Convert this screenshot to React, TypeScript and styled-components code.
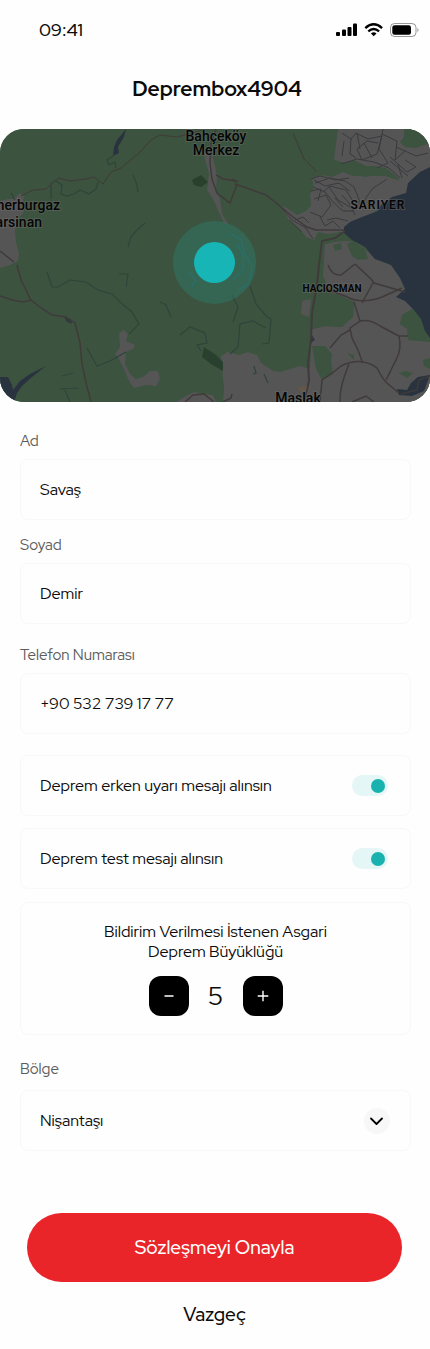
import React, { useState } from "react";
import styled, { createGlobalStyle } from "styled-components";

const GlobalStyle = createGlobalStyle`
  *, *::before, *::after { box-sizing: border-box; }
  body {
    margin: 0;
    background: #fefefe;
    color: #0b0b0b;
    font-family: "Red Hat Display", Lato, "Liberation Sans", sans-serif;
    text-rendering: optimizeLegibility;
  }
  button, input, select { font: inherit; color: inherit; text-rendering: inherit; }
`;

const Screen = styled.main`
  display: flex;
  flex-direction: column;
  min-height: 100vh;
  padding-bottom: 22px;
`;

const StatusBar = styled.div`
  display: flex;
  justify-content: space-between;
  align-items: center;
  height: 60px;
  padding: 0 10px 0 39px;
`;

const Clock = styled.time`
  font-size: 18px;
  line-height: 24px;
  font-weight: 500;
`;

const StatusIcons = styled.svg`
  display: block;
  width: 86px;
  height: 18px;
`;

const Title = styled.h1`
  margin: 15px 0 26px;
  padding-left: 4px;
  font-size: 21px;
  line-height: 28px;
  font-weight: 700;
  text-align: center;
`;

const MapFrame = styled.section`
  height: 273px;
  border-radius: 24px;
  overflow: hidden;
  background: #3c533f;
`;

const MapDrawing = styled.svg`
  display: block;
  width: 100%;
  height: 100%;
  font-family: Roboto, sans-serif;
  font-weight: 500;
`;

const Form = styled.form`
  display: flex;
  flex-direction: column;
  padding: 30px 19px 0 20px;
`;

const Field = styled.div<{ $after?: number; $gap?: number }>`
  display: flex;
  flex-direction: column;
  gap: ${(p) => p.$gap ?? 9}px;
  margin-bottom: ${(p) => p.$after ?? 0}px;
`;

const Label = styled.label`
  font-size: 15px;
  line-height: 18px;
  color: #5c5c5c;
`;

const TextInput = styled.input`
  width: 100%;
  height: 61px;
  padding: 0 19px;
  border: 1px solid #f8f8f8;
  border-radius: 8px;
  background: #fefefe;
  font-size: 16px;
  outline: none;
  &:focus-visible { border-color: #17b1ae; }
`;

const ToggleRow = styled.label<{ $after: number }>`
  display: flex;
  justify-content: space-between;
  align-items: center;
  height: 61px;
  margin-bottom: ${(p) => p.$after}px;
  padding: 0 22px 0 19px;
  border: 1px solid #f8f8f8;
  border-radius: 8px;
  font-size: 16px;
`;

const Switch = styled.input`
  appearance: none;
  display: flex;
  align-items: center;
  width: 36px;
  height: 21px;
  margin: 0;
  padding: 0 3px;
  border-radius: 11px;
  background: #eeeeee;
  cursor: pointer;
  &::before {
    content: "";
    width: 14px;
    height: 14px;
    border-radius: 50%;
    background: #a5a5a5;
  }
  &:checked { justify-content: flex-end; background: #e4f7f6; }
  &:checked::before { background: #19b2ae; }
`;

const StepperCard = styled.fieldset`
  display: flex;
  flex-direction: column;
  align-items: center;
  min-width: 0;
  margin: 0 0 25px;
  padding: 19px 20px 18px;
  border: 1px solid #f8f8f8;
  border-radius: 8px;
`;

const StepperText = styled.p`
  max-width: 240px;
  margin: 0 0 14px;
  font-size: 16px;
  line-height: 20px;
  text-align: center;
`;

const Stepper = styled.div`
  display: flex;
  align-items: center;
`;

const StepButton = styled.button`
  display: grid;
  place-items: center;
  width: 40px;
  height: 40px;
  padding: 0;
  border: 0;
  border-radius: 12px;
  background: #000;
  cursor: pointer;
`;

const StepValue = styled.output`
  width: 54px;
  font-size: 26px;
  line-height: 32px;
  text-align: center;
`;

const SelectBox = styled.div`
  display: grid;
  align-items: center;
  > * { grid-area: 1 / 1; }
`;

const Select = styled.select`
  appearance: none;
  width: 100%;
  height: 61px;
  padding: 0 60px 0 19px;
  border: 1px solid #f8f8f8;
  border-radius: 8px;
  background: #fefefe;
  font-size: 16px;
`;

const Chevron = styled.svg`
  justify-self: end;
  width: 26px;
  height: 26px;
  margin-right: 21px;
  pointer-events: none;
`;

const Submit = styled.button`
  height: 69px;
  margin: 62px 9px 21px 7px;
  border: 0;
  border-radius: 35px;
  background: #e92529;
  color: #fff;
  font-size: 19px;
  font-weight: 500;
  cursor: pointer;
`;

const Cancel = styled.button`
  align-self: center;
  margin-right: 2px;
  padding: 0;
  border: 0;
  background: none;
  font-size: 19px;
  line-height: 24px;
  font-weight: 500;
  cursor: pointer;
`;

function DeviceStatus() {
  return (
    <StatusIcons viewBox="0 0 86 18" aria-label="Sinyal, Wi-Fi, pil">
      <rect x="2" y="11" width="4" height="4" rx="1" />
      <rect x="8" y="8.500" width="4" height="6.500" rx="1" />
      <rect x="13.500" y="6" width="4" height="9" rx="1" />
      <rect x="19" y="2.500" width="4" height="12.500" rx="1" />
      <g fill="none" stroke="#000" strokeWidth="2.300">
        <path d="M31.300 7.100 Q39.700 -.6 48.100 7.100" />
        <path d="M34.300 10.300 Q39.700 5.600 45.100 10.300" />
      </g>
      <path d="M36.900 12.400 Q39.700 10 42.500 12.400 L39.700 15.300 Z" />
      <rect x="56.500" y="2.500" width="25.500" height="13" rx="4" fill="none" stroke="#000" strokeOpacity=".4" />
      <rect x="58.300" y="4.300" width="18.700" height="9.400" rx="2.200" />
      <path d="M83.500 7 Q85.500 9 83.500 11 Z" opacity=".5" />
    </StatusIcons>
  );
}

function RegionMap() {
  return (
    <MapDrawing viewBox="0 0 430 273" preserveAspectRatio="xMidYMid slice" role="img" aria-label="Konum haritası">
      <rect width="430" height="273" fill="#3c533f" />
      <g fill="#555555">
        <path d="M0 72L8 70L14 70L20 64L24 67L22 77L24 83L17 91L15 101L16 114L19 124L18 132L10 136L0 139Z" />
        <path d="M203 22L211 21L217 46L216 62L220 70L222 85L228 95L224 94L217 79L213 70L207 61L209 44L206 34Z" />
        <path d="M338 0L336 14L334 31L345 34L354 31L366 37L374 37L386 39L397 48L404 60L430 44V0Z" />
        <path d="M312 49L322 46L332 48L343 43L353 47L385 47L400 52L410 58L405 70L385 75L370 86L350 95L345 104L332 106L318 103L314 111L306 108L298 98L289 91L281 77L287 79L297 86L306 82L311 77L310 65L314 59Z" />
        <path d="M325 114L345 112L358 113L375 130L395 136L430 170V273H223L224 260L221 227L228 223L239 226L248 223L257 226L261 234L273 242L280 243L290 240L300 237L310 240L312 200L326 197L342 198L353 187L354 173L344 169L332 165L327 156L323 147Z" />
        <path d="M119 204L124 201L128 205L126 212L135 216L133 220L126 223L125 235L130 245L136 250L143 248L150 242L158 242L160 250L156 257L146 256L134 259L129 252L124 240L118 228L115 225L120 218Z" />
        <path d="M176 273L186 267L194 263L204 265L213 266L216 273ZM302 172L311 170L309 188L301 185Z" />
      </g>
      <g fill="#3c533f">
        <path d="M404 0L404 8L400 13L405 18L416 19L427 15L430 12V0Z" />
        <path d="M344 36L352 34L365 39L378 38L388 43L377 46L365 48L350 45L341 40Z" />
        <path d="M315 109L328 105L341 103L344 109L327 115ZM333 116L341 114L342 120L335 122Z" />
        <path d="M347 115L354 112L365 120L368 130L358 131L352 127Z" />
        <path d="M325 165L337 165L354 173L353 188L341 198L326 197L312 200L313 168Z" />
        <path d="M402 186L412 180L419 182L424 197L430 203V213L408 211L407 200L400 195Z" />
        <path d="M312 217L325 217L332 225L331 232L333 245L322 251L316 240ZM423 231L430 229V240L424 237Z" />
        <path d="M399 244L405 242L413 244L407 249ZM347 224L354 226L354 231Z" />
      </g>
      <g fill="#29333f">
        <path d="M430 38L420 43L408 54L406 64L392 68L381 76L378 82L362 88L350 93L344 98L344 104L352 111L365 118L375 130L391 136L400 149L405 160L396 168L405 172L414 181L421 190L425 202L430 209Z" />
        <path d="M0 248L8 248L12 256L13 261L20 252L30 245L46 237L32 248L22 257L17 264L14 273H0ZM397 260L407 261L411 254L418 248L430 246L424 262L412 267L399 266Z" />
        <path d="M126 0L117 11L114 18L113 27L119 24L118 18L124 8Z" />
      </g>
      <path d="M192 51L201 46L208 53L201 58L194 56ZM204 218L216 226L223 233V242L211 235L202 228Z" fill="#29402f" />
      <g fill="none" stroke="#30443b" strokeWidth="1.200">
        <path d="M113 27L107 31L109 36L115 33L116 39M56 52L62 56L61 65L67 67L74 65L80 61L89 65L96 60L98 53M51 54V70M133 46L136 53L138 63M145 94L136 102L131 108L128 118" />
        <path d="M47 143L52 158L58 158L70 151L86 153L98 161L112 165L121 174L132 183L139 195L129 205M119 145L128 145L126 158M160 173L166 176L171 188M126 223L110 232L97 237L87 219M62 247L73 244M60 260L79 259M65 261L70 273" />
        <path d="M180 206L190 198L205 204L207 214L197 216L201 222M250 157L256 175L266 187L271 190L269 214L262 215M230 225L238 218L240 195L253 192L266 199M232 166L238 178L233 193" />
        <path d="M11 64L15 71M254 237L256 244L253 245M264 245L268 254" />
        <path d="M231 105L241 111L245 126L252 137L249 155L238 161M237 114L244 129L242 142L233 151M189 143L196 152L191 158" stroke="#2c6060" />
      </g>
      <g fill="none" stroke="#3b3b3f" strokeWidth="1">
        <path d="M342 4L351 10L356 4L368 10L382 7L377 25L362 31L357 20L367 12L378 14M351 10L350 25L356 29M357 4L360 20M383 0L379 20L388 34L377 39M382 5L397 12L395 31L405 22L416 27L428 24M405 22L396 18M405 31L416 38L407 43L390 28M341 35L357 30L374 33L389 39L400 49" />
        <path d="M315 54L330 49L345 52L354 58L360 73L353 82L343 82L333 73L325 63L313 58M323 63L330 57L346 61L353 72M329 58L338 71L350 78M314 70L326 66L331 76L322 88L310 83M320 88L325 97L333 92L340 99M355 86L349 74L342 66M362 75L372 60L387 50" />
        <path d="M280 77L292 91L306 99L313 110M289 91L302 103M295 91L303 88L309 94M311 50L320 47L336 51L349 49M314 51L325 57L339 54L350 62M311 62L321 60L318 72M335 69L343 78M327 91L336 89L348 92M398 35L402 49M390 32L408 47M364 14L372 29M344 12L342 27" />
      </g>
      <g fill="none" stroke="#403a3b" strokeWidth="1.500">
        <path d="M21 67L33 61L46 60L51 55L59 49L70 52L86 50L94 48L103 55L111 43L121 39L138 25L151 11L160 6L177 8L193 4L205 0" strokeWidth="1" />
        <path d="M216 0L211 15L210 34L212 50L217 64L230 74L237 55M216 46L223 50L231 51L238 53L232 50M235 55L252 61L266 66L280 77L293 88L307 98L316 101L344 101" />
        <path d="M293 4L299 18L304 30L317 43" strokeWidth="1" />
        <path d="M319 136L322 112L335 109L345 102M319 136L317 155L312 184L311 210L308 234L309 252L304 273" strokeWidth="2" />
        <path d="M17 136L21 151L27 163L31 172M0 122L14 133M0 167L12 171L24 173L31 171L41 179L52 186L66 188L75 194L80 214L82 235L87 258L91 273" />
        <path d="M328 136Q332 147 341 146L355 135M355 135L371 150L374 154L405 163M373 154L362 174M325 160L345 167Q361 176 382 168L402 159M354 173L360 192L350 199L352 209L358 221L362 232M360 192Q370 190 380 197L399 207Q402 220 396 231L386 251M399 207L408 207M330 219L341 206L350 201" />
        <path d="M320 273L322 251Q334 243 341 237Q361 227 377 239Q383 251 388 255L399 264M340 273Q339 259 349 235M352 273L366 267L374 273M401 265L417 261L419 251L430 247" />
        <path d="M185 273L193 266L204 265L214 273M223 273L231 269L232 265" />
      </g>
      <path d="M64 188L71 191L72 195L67 193ZM312 206L315 211L311 214Z" fill="#303a40" />
      <path d="M299 258L307 257L306 262L299 262Z" fill="#655744" />
      <circle cx="214.500" cy="133.500" r="41.500" fill="#20a195" fillOpacity=".25" />
      <circle cx="214.500" cy="133.500" r="20.500" fill="#18b5b6" />
      <g fill="#050505" stroke="#777" strokeOpacity=".35" strokeWidth="2" paintOrder="stroke">
        <text x="216" y="12" fontSize="14" textAnchor="middle">Bahçeköy</text>
        <text x="216" y="26" fontSize="14" textAnchor="middle">Merkez</text>
        <text x="60" y="81" fontSize="14" textAnchor="end">Kemerburgaz</text>
        <text x="42" y="98" fontSize="14" textAnchor="end">Mimarsinan</text>
        <text x="378" y="80" fontSize="12" fontWeight="600" letterSpacing="1" textAnchor="middle">SARIYER</text>
        <text x="332" y="163" fontSize="10" fontWeight="700" textAnchor="middle">HACIOSMAN</text>
        <text x="298" y="274" fontSize="14" textAnchor="middle">Maslak</text>
      </g>
    </MapDrawing>
  );
}

export default function App() {
  const [magnitude, setMagnitude] = useState(5);

  return (
    <Screen>
      <GlobalStyle />
      <StatusBar>
        <Clock>09:41</Clock>
        <DeviceStatus />
      </StatusBar>
      <Title>Deprembox4904</Title>
      <MapFrame>
        <RegionMap />
      </MapFrame>
      <Form onSubmit={(e) => e.preventDefault()}>
        <Field $after={16}>
          <Label htmlFor="name">Ad</Label>
          <TextInput id="name" defaultValue="Savaş" />
        </Field>
        <Field $after={22}>
          <Label htmlFor="surname">Soyad</Label>
          <TextInput id="surname" defaultValue="Demir" />
        </Field>
        <Field $after={21}>
          <Label htmlFor="phone">Telefon Numarası</Label>
          <TextInput id="phone" type="tel" defaultValue="+90 532 739 17 77" />
        </Field>
        <ToggleRow $after={12}>
          Deprem erken uyarı mesajı alınsın
          <Switch type="checkbox" role="switch" defaultChecked />
        </ToggleRow>
        <ToggleRow $after={13}>
          Deprem test mesajı alınsın
          <Switch type="checkbox" role="switch" defaultChecked />
        </ToggleRow>
        <StepperCard aria-labelledby="magnitude-text">
          <StepperText id="magnitude-text">Bildirim Verilmesi İstenen Asgari Deprem Büyüklüğü</StepperText>
          <Stepper>
            <StepButton type="button" aria-label="Azalt" onClick={() => setMagnitude((m) => Math.max(1, m - 1))}>
              <svg width="12" height="12" viewBox="0 0 12 12" stroke="#fff" strokeWidth="1.500">
                <path d="M1.500 6H10.500" />
              </svg>
            </StepButton>
            <StepValue>{magnitude}</StepValue>
            <StepButton type="button" aria-label="Artır" onClick={() => setMagnitude((m) => Math.min(9, m + 1))}>
              <svg width="12" height="12" viewBox="0 0 12 12" stroke="#fff" strokeWidth="1.400">
                <path d="M.7 6H11.300M6 .7V11.300" />
              </svg>
            </StepButton>
          </Stepper>
        </StepperCard>
        <Field $gap={12}>
          <Label htmlFor="region">Bölge</Label>
          <SelectBox>
            <Select id="region" defaultValue="Nişantaşı">
              <option>Nişantaşı</option>
            </Select>
            <Chevron viewBox="0 0 26 26" aria-hidden="true">
              <circle cx="13" cy="13" r="13" fill="#f7f7f7" />
              <path d="M7 10.500L12.500 16L18 10.500" fill="none" stroke="#000" strokeWidth="1.800" strokeLinecap="round" strokeLinejoin="round" />
            </Chevron>
          </SelectBox>
        </Field>
        <Submit type="submit">Sözleşmeyi Onayla</Submit>
        <Cancel type="button">Vazgeç</Cancel>
      </Form>
    </Screen>
  );
}
